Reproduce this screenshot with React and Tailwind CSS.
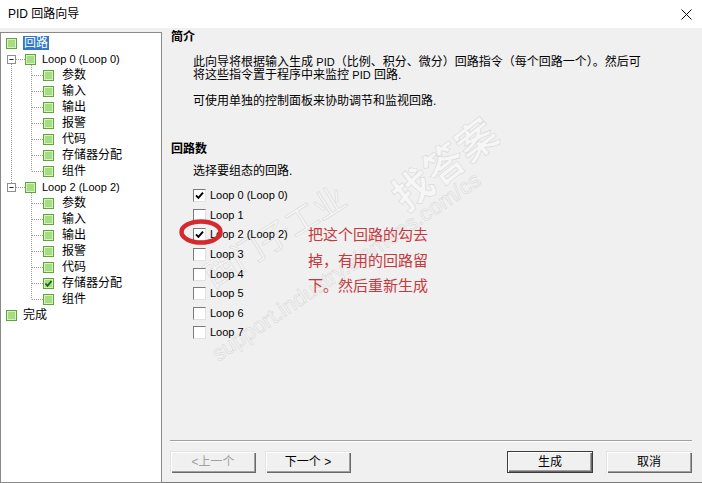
import React from "react";

const treeRows = [
    {kind: "root", label: "回路", selected: true},
    {kind: "loop", label: "Loop 0 (Loop 0)"},
    {kind: "child", label: "参数"},
    {kind: "child", label: "输入"},
    {kind: "child", label: "输出"},
    {kind: "child", label: "报警"},
    {kind: "child", label: "代码"},
    {kind: "child", label: "存储器分配"},
    {kind: "child", label: "组件"},
    {kind: "loop", label: "Loop 2 (Loop 2)"},
    {kind: "child", label: "参数"},
    {kind: "child", label: "输入"},
    {kind: "child", label: "输出"},
    {kind: "child", label: "报警"},
    {kind: "child", label: "代码"},
    {kind: "child", label: "存储器分配", checked: true},
    {kind: "child", label: "组件"},
    {kind: "root", label: "完成"},
];

const loops = [
    {label: "Loop 0 (Loop 0)", checked: true},
    {label: "Loop 1"},
    {label: "Loop 2 (Loop 2)", checked: true},
    {label: "Loop 3"},
    {label: "Loop 4"},
    {label: "Loop 5"},
    {label: "Loop 6"},
    {label: "Loop 7"},
];

const rowPad = {
    root: "pl-[5px]",
    loop: "pl-[24px]",
    child: "pl-[42px]",
};

const textGap = {
    root: "ml-[6px]",
    loop: "ml-[6px] text-[11px]",
    child: "ml-[8px]",
};

function GreenBox({checked}) {
    return (
        <span className="flex h-[11px] w-[11px] shrink-0 items-center justify-center border border-[#5da63c] bg-[#a8dc82] shadow-[inset_0_0_0_1px_#d4f2bd]">
            {checked && (
                <svg width="9" height="9" viewBox="0 0 9 9">
                    <polyline points="1.5,4.5 3.5,6.8 7.5,2" fill="none" stroke="#1f5e12" strokeWidth="1.8"/>
                </svg>
            )}
        </span>
    );
}

function CheckBox({checked}) {
    return (
        <span className="flex h-[13px] w-[13px] shrink-0 items-center justify-center border border-t-[#7a7a7a] border-l-[#7a7a7a] border-r-[#e2e2e2] border-b-[#e2e2e2] bg-white">
            {checked && (
                <svg width="9" height="9" viewBox="0 0 9 9">
                    <polyline points="1,4.3 3.4,6.9 8,1.6" fill="none" stroke="#000" strokeWidth="1.9"/>
                </svg>
            )}
        </span>
    );
}

// dotted tree lines and the [-] boxes
function TreeLines() {
    const childRowsA = [2, 3, 4, 5, 6, 7, 8];
    const childRowsB = [10, 11, 12, 13, 14, 15, 16];
    const y = (i) => 10.5 + 16 * i;
    return (
        <svg className="pointer-events-none absolute left-0 top-0" width="160" height="300">
            <g stroke="#a0a0a0" strokeWidth="1" strokeDasharray="1 1" fill="none">
                <line x1="10.5" y1="31" x2="10.5" y2="150"/>
                <line x1="15" y1={y(1)} x2="24" y2={y(1)}/>
                <line x1="15" y1={y(9)} x2="24" y2={y(9)}/>
                <line x1="30.5" y1="32" x2="30.5" y2={y(8)}/>
                <line x1="30.5" y1="160" x2="30.5" y2={y(16)}/>
                {[...childRowsA, ...childRowsB].map((i) => (
                    <line key={i} x1="31" y1={y(i)} x2="42" y2={y(i)}/>
                ))}
            </g>
            {[1, 9].map((i) => (
                <g key={i}>
                    <rect x="6.5" y={y(i) - 4} width="8" height="8" fill="#fff" stroke="#8f8f8f"/>
                    <line x1="8.5" y1={y(i)} x2="12.5" y2={y(i)} stroke="#222"/>
                </g>
            ))}
        </svg>
    );
}

function Button({children, disabled, primary}) {
    return (
        <button
            className={
                primary
                    ? "h-[22px] w-[86px] border border-[#3c3c3c] bg-[#f0f0f0] text-[12px] leading-none text-black shadow-[inset_1px_1px_0_#ffffff,inset_-1px_-1px_0_#696969,inset_-2px_-2px_0_#a0a0a0]"
                    : disabled
                        ? "h-[22px] w-[86px] bg-[#f0f0f0] text-[12px] leading-none text-[#a0a0a0] shadow-[inset_1px_1px_0_#e3e3e3,inset_2px_2px_0_#ffffff,inset_-1px_-1px_0_#696969,inset_-2px_-2px_0_#a0a0a0]"
                        : "h-[22px] w-[86px] bg-[#f0f0f0] text-[12px] leading-none text-black shadow-[inset_1px_1px_0_#e3e3e3,inset_2px_2px_0_#ffffff,inset_-1px_-1px_0_#696969,inset_-2px_-2px_0_#a0a0a0]"
            }
        >
            {children}
        </button>
    );
}

function App() {
    return (
        <div className="flex h-[483px] w-[702px] flex-col overflow-hidden bg-[#f0f0f0] font-['Liberation_Sans','Noto_Sans_CJK_SC',sans-serif] text-[12px] text-black">
            {/* title bar */}
            <div className="flex h-[28px] shrink-0 items-center justify-between bg-white pl-[8px] pr-[10px]">
                <span className="leading-none">PID 回路向导</span>
                <svg width="11" height="11" viewBox="0 0 11 11">
                    <path d="M0.5 0.5 L10.5 10.5 M10.5 0.5 L0.5 10.5" stroke="#111" strokeWidth="1"/>
                </svg>
            </div>

            <div className="flex flex-1">
                {/* tree */}
                <div className="relative mt-[4px] w-[162px] shrink-0 border border-[#8a8a8a] bg-white pt-[2px]">
                    <TreeLines/>
                    {treeRows.map((row, i) => (
                        <div key={i} className={"relative flex h-[16px] items-center " + rowPad[row.kind]}>
                            <GreenBox checked={row.checked}/>
                            <span className={textGap[row.kind]}>
                                {row.selected ? (
                                    <span className="block h-[14px] bg-[#3179c6] px-[1px] leading-[14px] text-white">{row.label}</span>
                                ) : (
                                    <span className="block leading-[14px] whitespace-nowrap">{row.label}</span>
                                )}
                            </span>
                        </div>
                    ))}
                </div>

                {/* right pane */}
                <div className="relative flex flex-1 flex-col border-b border-[#7a7a7a] pb-[9px] pl-[8px] pr-[10px]">
                    {/* watermark */}
                    <span className="pointer-events-none absolute left-[223px] top-[117px] -rotate-[38deg] whitespace-nowrap text-[40px] font-bold leading-[40px] text-[#f6f6f6] [-webkit-text-stroke:0.6px_#d9d9d9]">找答案</span>
                    <span className="pointer-events-none absolute left-[33px] top-[193px] -rotate-[32deg] whitespace-nowrap text-[32px] leading-[32px] text-[#f6f6f6] [-webkit-text-stroke:0.6px_#d9d9d9]">西门子工业</span>
                    <span className="pointer-events-none absolute left-[25px] top-[228px] -rotate-[34deg] whitespace-nowrap text-[22px] leading-[22px] text-[#f6f6f6] [-webkit-text-stroke:0.6px_#d9d9d9]">support.industry.siemens.com/cs</span>

                    <div className="relative ml-[1px] mt-[3px] font-bold leading-[13px]">简介</div>
                    <p className="relative ml-[23px] mt-[12px] whitespace-nowrap leading-[13px]">
                        此向导将根据输入生成 <span className="text-[11px]">PID</span>（比例、积分、微分）回路指令（每个回路一个）。然后可<br/>
                        将这些指令置于程序中来监控 <span className="text-[11px]">PID</span> 回路.
                    </p>
                    <p className="relative ml-[23px] mt-[13px] leading-[13px]">可使用单独的控制面板来协助调节和监视回路.</p>

                    <div className="relative ml-[1px] mt-[35px] font-bold leading-[13px]">回路数</div>
                    <p className="relative ml-[23px] mt-[9px] leading-[13px]">选择要组态的回路.</p>

                    <div className="relative ml-[23px] mt-[8px] flex">
                        <div className="relative w-[115px]">
                            {loops.map((loop) => (
                                <div key={loop.label} className="flex h-[19.6px] items-center">
                                    <CheckBox checked={loop.checked}/>
                                    <span className="ml-[4px] whitespace-nowrap text-[11px] leading-none">{loop.label}</span>
                                </div>
                            ))}
                            <svg className="pointer-events-none absolute left-[-14px] top-[33px]" width="46" height="27">
                                <ellipse cx="22" cy="13" rx="19.5" ry="10.5" fill="none" stroke="#d42a2f" strokeWidth="4.5"/>
                            </svg>
                        </div>
                        <div className="mt-[36px] whitespace-nowrap text-[15px] leading-[25.5px] text-[#c63a3e]">
                            把这个回路的勾去<br/>
                            掉，有用的回路留<br/>
                            下。然后重新生成
                        </div>
                    </div>

                    <div className="relative mt-auto border-b border-t border-b-white border-t-[#a0a0a0]"/>
                    <div className="relative mt-[9px] flex">
                        <Button disabled>&lt;上一个</Button>
                        <div className="ml-[9px]">
                            <Button>下一个 &gt;</Button>
                        </div>
                        <div className="ml-auto flex gap-[13px]">
                            <Button primary>生成</Button>
                            <Button>取消</Button>
                        </div>
                    </div>
                </div>
            </div>
        </div>
    );
}

export default App;
